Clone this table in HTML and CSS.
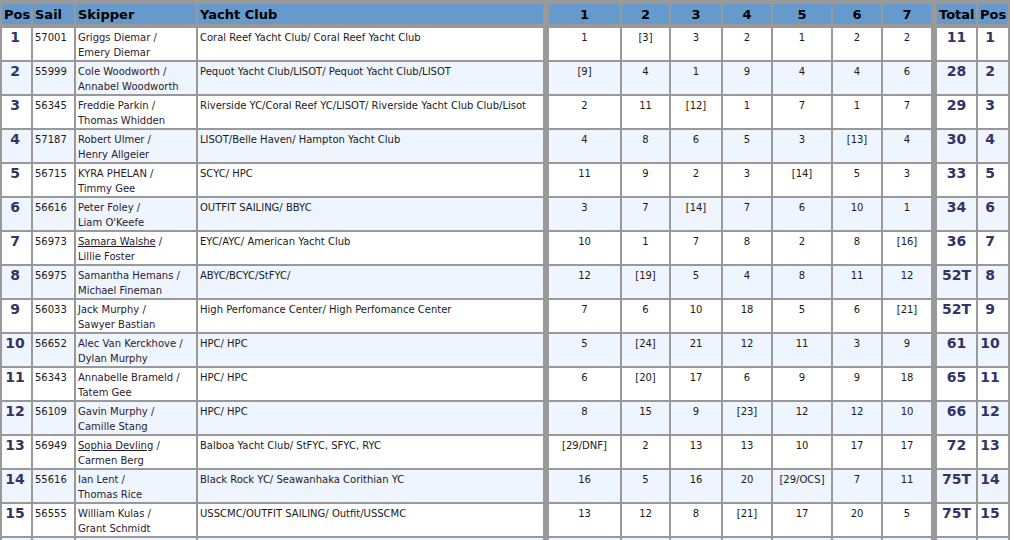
FILE: index.html
```html
<!DOCTYPE html>
<html>
<head>
<meta charset="utf-8">
<title>Results</title>
<link rel="stylesheet" href="styles.css">
</head>
<body>
<table class="results">
<colgroup>
<col class="w-pos"><col class="w-sail"><col class="w-skip"><col class="w-club"><col class="w-sep">
<col class="w-r1"><col class="w-r2"><col class="w-r3"><col class="w-r4"><col class="w-r5"><col class="w-r6"><col class="w-r7">
<col class="w-sep"><col class="w-tot"><col class="w-pos2">
</colgroup>
<thead>
<tr>
<th>Pos</th><th>Sail</th><th>Skipper</th><th>Yacht Club</th><th class="sep"></th>
<th class="c">1</th><th class="c">2</th><th class="c">3</th><th class="c">4</th><th class="c">5</th><th class="c">6</th><th class="c">7</th>
<th class="sep"></th><th class="c">Total</th><th class="c">Pos</th>
</tr>
</thead>
<tbody>
<tr><td class="pos">1</td><td>57001</td><td class="skip">Griggs Diemar /<br>Emery Diemar</td><td>Coral Reef Yacht Club/ Coral Reef Yacht Club</td><td class="sep"></td>
<td class="r">1</td><td class="r">[3]</td><td class="r">3</td><td class="r">2</td><td class="r">1</td><td class="r">2</td><td class="r">2</td><td class="sep"></td><td class="tot">11</td><td class="pos2">1</td></tr>
<tr class="alt"><td class="pos">2</td><td>55999</td><td class="skip">Cole Woodworth /<br>Annabel Woodworth</td><td>Pequot Yacht Club/LISOT/ Pequot Yacht Club/LISOT</td><td class="sep"></td>
<td class="r">[9]</td><td class="r">4</td><td class="r">1</td><td class="r">9</td><td class="r">4</td><td class="r">4</td><td class="r">6</td><td class="sep"></td><td class="tot">28</td><td class="pos2">2</td></tr>
<tr><td class="pos">3</td><td>56345</td><td class="skip">Freddie Parkin /<br>Thomas Whidden</td><td>Riverside YC/Coral Reef YC/LISOT/ Riverside Yacht Club Club/Lisot</td><td class="sep"></td>
<td class="r">2</td><td class="r">11</td><td class="r">[12]</td><td class="r">1</td><td class="r">7</td><td class="r">1</td><td class="r">7</td><td class="sep"></td><td class="tot">29</td><td class="pos2">3</td></tr>
<tr class="alt"><td class="pos">4</td><td>57187</td><td class="skip">Robert Ulmer /<br>Henry Allgeier</td><td>LISOT/Belle Haven/ Hampton Yacht Club</td><td class="sep"></td>
<td class="r">4</td><td class="r">8</td><td class="r">6</td><td class="r">5</td><td class="r">3</td><td class="r">[13]</td><td class="r">4</td><td class="sep"></td><td class="tot">30</td><td class="pos2">4</td></tr>
<tr><td class="pos">5</td><td>56715</td><td class="skip">KYRA PHELAN /<br>Timmy Gee</td><td>SCYC/ HPC</td><td class="sep"></td>
<td class="r">11</td><td class="r">9</td><td class="r">2</td><td class="r">3</td><td class="r">[14]</td><td class="r">5</td><td class="r">3</td><td class="sep"></td><td class="tot">33</td><td class="pos2">5</td></tr>
<tr class="alt"><td class="pos">6</td><td>56616</td><td class="skip">Peter Foley /<br>Liam O'Keefe</td><td>OUTFIT SAILING/ BBYC</td><td class="sep"></td>
<td class="r">3</td><td class="r">7</td><td class="r">[14]</td><td class="r">7</td><td class="r">6</td><td class="r">10</td><td class="r">1</td><td class="sep"></td><td class="tot">34</td><td class="pos2">6</td></tr>
<tr><td class="pos">7</td><td>56973</td><td class="skip"><a href="#">Samara Walshe</a> /<br>Lillie Foster</td><td>EYC/AYC/ American Yacht Club</td><td class="sep"></td>
<td class="r">10</td><td class="r">1</td><td class="r">7</td><td class="r">8</td><td class="r">2</td><td class="r">8</td><td class="r">[16]</td><td class="sep"></td><td class="tot">36</td><td class="pos2">7</td></tr>
<tr class="alt"><td class="pos">8</td><td>56975</td><td class="skip">Samantha Hemans /<br>Michael Fineman</td><td>ABYC/BCYC/StFYC/</td><td class="sep"></td>
<td class="r">12</td><td class="r">[19]</td><td class="r">5</td><td class="r">4</td><td class="r">8</td><td class="r">11</td><td class="r">12</td><td class="sep"></td><td class="tot">52T</td><td class="pos2">8</td></tr>
<tr><td class="pos">9</td><td>56033</td><td class="skip">Jack Murphy /<br>Sawyer Bastian</td><td>High Perfomance Center/ High Perfomance Center</td><td class="sep"></td>
<td class="r">7</td><td class="r">6</td><td class="r">10</td><td class="r">18</td><td class="r">5</td><td class="r">6</td><td class="r">[21]</td><td class="sep"></td><td class="tot">52T</td><td class="pos2">9</td></tr>
<tr class="alt"><td class="pos">10</td><td>56652</td><td class="skip">Alec Van Kerckhove /<br>Dylan Murphy</td><td>HPC/ HPC</td><td class="sep"></td>
<td class="r">5</td><td class="r">[24]</td><td class="r">21</td><td class="r">12</td><td class="r">11</td><td class="r">3</td><td class="r">9</td><td class="sep"></td><td class="tot">61</td><td class="pos2">10</td></tr>
<tr><td class="pos">11</td><td>56343</td><td class="skip">Annabelle Brameld /<br>Tatem Gee</td><td>HPC/ HPC</td><td class="sep"></td>
<td class="r">6</td><td class="r">[20]</td><td class="r">17</td><td class="r">6</td><td class="r">9</td><td class="r">9</td><td class="r">18</td><td class="sep"></td><td class="tot">65</td><td class="pos2">11</td></tr>
<tr class="alt"><td class="pos">12</td><td>56109</td><td class="skip">Gavin Murphy /<br>Camille Stang</td><td>HPC/ HPC</td><td class="sep"></td>
<td class="r">8</td><td class="r">15</td><td class="r">9</td><td class="r">[23]</td><td class="r">12</td><td class="r">12</td><td class="r">10</td><td class="sep"></td><td class="tot">66</td><td class="pos2">12</td></tr>
<tr><td class="pos">13</td><td>56949</td><td class="skip"><a href="#">Sophia Devling</a> /<br>Carmen Berg</td><td>Balboa Yacht Club/ StFYC, SFYC, RYC</td><td class="sep"></td>
<td class="r">[29/DNF]</td><td class="r">2</td><td class="r">13</td><td class="r">13</td><td class="r">10</td><td class="r">17</td><td class="r">17</td><td class="sep"></td><td class="tot">72</td><td class="pos2">13</td></tr>
<tr class="alt"><td class="pos">14</td><td>55616</td><td class="skip">Ian Lent /<br>Thomas Rice</td><td>Black Rock YC/ Seawanhaka Corithian YC</td><td class="sep"></td>
<td class="r">16</td><td class="r">5</td><td class="r">16</td><td class="r">20</td><td class="r">[29/OCS]</td><td class="r">7</td><td class="r">11</td><td class="sep"></td><td class="tot">75T</td><td class="pos2">14</td></tr>
<tr><td class="pos">15</td><td>56555</td><td class="skip">William Kulas /<br>Grant Schmidt</td><td>USSCMC/OUTFIT SAILING/ Outfit/USSCMC</td><td class="sep"></td>
<td class="r">13</td><td class="r">12</td><td class="r">8</td><td class="r">[21]</td><td class="r">17</td><td class="r">20</td><td class="r">5</td><td class="sep"></td><td class="tot">75T</td><td class="pos2">15</td></tr>
<tr class="alt"><td class="pos"></td><td></td><td class="skip"></td><td></td><td class="sep"></td>
<td class="r"></td><td class="r"></td><td class="r"></td><td class="r"></td><td class="r"></td><td class="r"></td><td class="r"></td><td class="sep"></td><td class="tot"></td><td class="pos2"></td></tr>
</tbody>
</table>
</body>
</html>
```
FILE: styles.css
```css
body {
  margin: 0;
  background: #ffffff;
  font-family: "DejaVu Sans", Verdana, sans-serif;
  font-size: 10px;
  color: #1a1a1a;
}

.results {
  border-collapse: separate;
  border-spacing: 2px;
  background: #999999;
  table-layout: fixed;
  width: 1010px;
  padding-top: 2px;
}

.w-pos { width: 29px; }
.w-sail { width: 41px; }
.w-skip { width: 120px; }
.w-club { width: 345px; }
.w-sep { width: 2px; }
.w-r1 { width: 71px; }
.w-r2 { width: 47px; }
.w-r3 { width: 50px; }
.w-r4 { width: 48px; }
.w-r5 { width: 58px; }
.w-r6 { width: 48px; }
.w-r7 { width: 48px; }
.w-tot { width: 39px; }
.w-pos2 { width: 30px; }

.results th {
  box-sizing: border-box;
  height: 22px;
  padding: 1px 2px 0;
  background: #6699cc;
  border-bottom: 2px solid #999999;
  color: #000000;
  font-size: 13px;
  font-weight: bold;
  line-height: 16px;
  text-align: left;
  white-space: nowrap;
  overflow: hidden;
}

.results th.c {
  text-align: center;
}

.results td {
  box-sizing: border-box;
  height: 32px;
  padding: 2px 2px 0;
  background: #ffffff;
  line-height: 15px;
  vertical-align: top;
  white-space: nowrap;
  overflow: hidden;
}

.results tr.alt td {
  background: #eef5fe;
}

.results th.sep,
.results td.sep,
.results tr.alt td.sep {
  padding: 0;
  background: #999999;
}

.results td.skip {
  color: #2a1a30;
}

.results td.skip a {
  color: inherit;
  text-decoration: underline;
}

.results td.pos,
.results td.tot,
.results td.pos2 {
  padding-top: 1px;
  font-size: 14px;
  font-weight: bold;
  color: #333366;
  text-align: center;
  line-height: 16px;
}

.results td.pos {
  padding-right: 5px;
}

.results td.pos2 {
  padding-right: 8px;
}

.results td.r {
  text-align: center;
}
```
